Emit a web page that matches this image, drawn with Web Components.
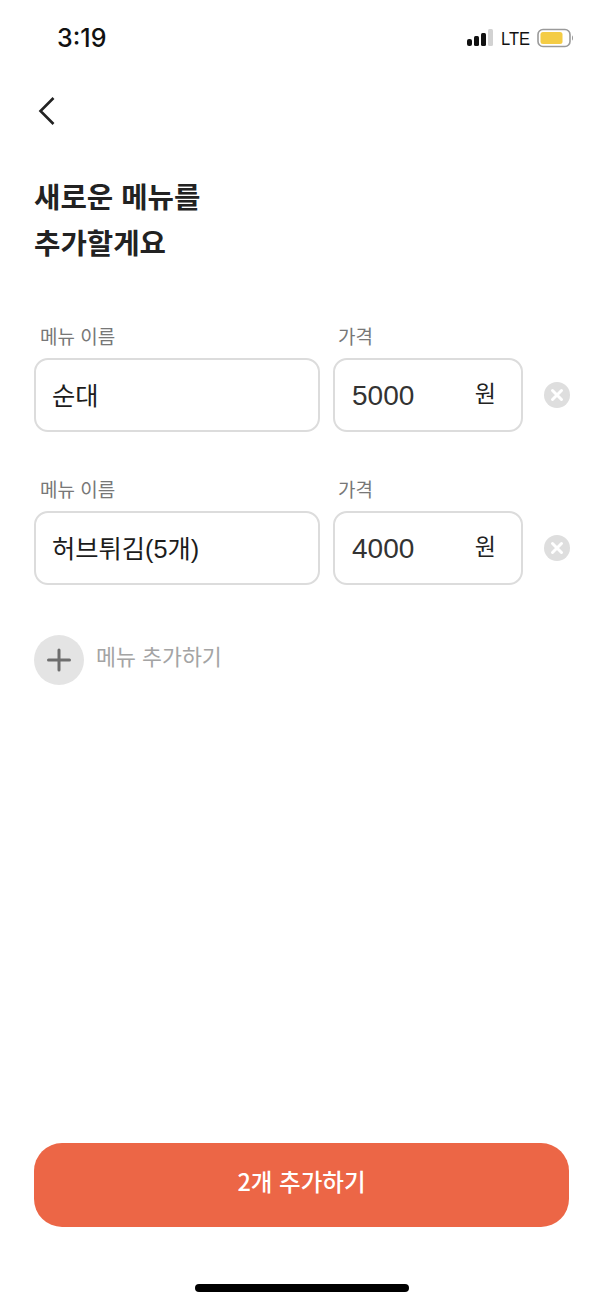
<!DOCTYPE html>
<html lang="ko">
<head>
<meta charset="utf-8">
<title>메뉴 추가</title>
<style>
  html, body { margin: 0; background: #fff; }
  body { font-family: "Noto Sans CJK KR", "Noto Sans", sans-serif; }
</style>
</head>
<body>
<menu-page>
  <status-bar time="3:19"></status-bar>
  <back-nav></back-nav>
  <page-title>새로운 메뉴를<br>추가할게요</page-title>
  <menu-row name="순대" price="5000"></menu-row>
  <menu-row name="허브튀김(5개)" price="4000"></menu-row>
  <add-menu>메뉴 추가하기</add-menu>
  <submit-button slot="bottom">2개 추가하기</submit-button>
  <home-bar slot="bottom"></home-bar>
</menu-page>

<script>
customElements.define('menu-page', class extends HTMLElement {
  constructor() {
    super();
    this.attachShadow({ mode: 'open' }).innerHTML = `
      <style>
        :host { display: flex; flex-direction: column; justify-content: space-between; width: 603px; height: 1304px; overflow: hidden; }
      </style>
      <div><slot></slot></div>
      <div><slot name="bottom"></slot></div>
    `;
  }
});

customElements.define('status-bar', class extends HTMLElement {
  constructor() {
    super();
    this.attachShadow({ mode: 'open' }).innerHTML = `
      <style>
        :host { display: flex; align-items: center; justify-content: space-between; height: 76px; padding: 0 29px 0 57px; }
        .time { font: 500 25px/1 Inter, "Liberation Sans", sans-serif; color: #111; }
        .right { display: flex; align-items: center; gap: 7px; }
        .lte { font: 500 16.500px/1 "Liberation Sans", sans-serif; color: #111; transform: scaleY(1.15); }
      </style>
      <span class="time">${this.getAttribute('time')}</span>
      <div class="right">
        <svg width="27" height="18" viewBox="0 0 27 18">
          <rect x="0" y="10" width="5" height="7" rx="2" fill="#111"/>
          <rect x="7" y="7" width="5" height="10" rx="1.5" fill="#111"/>
          <rect x="14" y="4" width="5" height="13" rx="1.5" fill="#111"/>
          <rect x="21" y="0" width="5" height="17" rx="1.5" fill="#d2d2d2"/>
        </svg>
        <span class="lte">LTE</span>
        <svg width="37" height="20" viewBox="0 0 37 20">
          <rect x="1" y="1.5" width="32" height="17" rx="5" fill="#fff" stroke="#9a9a9a" stroke-width="1.6"/>
          <rect x="3.500" y="4" width="22" height="12" rx="2.500" fill="#f4cc45"/>
          <path d="M35 7.500c1.200.5 1.200 4.500 0 5z" fill="#8a8a8a"/>
        </svg>
      </div>
    `;
  }
});

customElements.define('back-nav', class extends HTMLElement {
  constructor() {
    super();
    this.attachShadow({ mode: 'open' }).innerHTML = `
      <style>
        :host { display: flex; align-items: center; height: 70px; padding-left: 38px; }
        svg { display: block; }
      </style>
      <svg width="18" height="30" viewBox="0 0 18 30" fill="none">
        <path d="M15.500 2 2.500 15l13 13" stroke="#222" stroke-width="2.600"/>
      </svg>
    `;
  }
});

customElements.define('page-title', class extends HTMLElement {
  constructor() {
    super();
    this.attachShadow({ mode: 'open' }).innerHTML = `
      <style>
        :host { display: block; padding: 27px 34px 0; margin-bottom: 56px; font-size: 28.700px; font-weight: 700; line-height: 46px; color: #222; }
      </style>
      <slot></slot>
    `;
  }
});

customElements.define('menu-row', class extends HTMLElement {
  constructor() {
    super();
    this.attachShadow({ mode: 'open' }).innerHTML = `
      <style>
        :host { display: grid; grid-template-columns: 286px 190px 26px; column-gap: 13px; row-gap: 7px; padding-left: 34px; margin-bottom: 42px; align-items: center; }
        .label { font-size: 19px; line-height: 30px; color: #777; padding-left: 6px; }
        .label.price { padding-left: 5px; }
        .box { box-sizing: border-box; height: 74px; border: 2px solid #dcdcdc; border-radius: 14px; display: flex; align-items: center; font-family: "Liberation Sans", "Noto Sans CJK KR", sans-serif; }
        .name { padding: 0 0 2px 16px; font-size: 25.300px; color: #1c1c1c; }
        .cost { justify-content: space-between; padding: 0 25px 0 17px; font-size: 28px; color: #333; }
        .num { position: relative; top: 1px; }
        .unit { font-size: 23px; color: #222; position: relative; top: -3px; }
        svg { display: block; margin-left: 8px; }
      </style>
      <span class="label">메뉴 이름</span>
      <span class="label price">가격</span>
      <span></span>
      <div class="box name">${this.getAttribute('name')}</div>
      <div class="box cost"><span class="num">${this.getAttribute('price')}</span><span class="unit">원</span></div>
      <svg width="26" height="26" viewBox="0 0 26 26">
        <circle cx="13" cy="13" r="13" fill="#dedede"/>
        <path d="M8.500 8.500l9 9M17.500 8.500l-9 9" stroke="#fff" stroke-width="3" stroke-linecap="round"/>
      </svg>
    `;
  }
});

customElements.define('add-menu', class extends HTMLElement {
  constructor() {
    super();
    this.attachShadow({ mode: 'open' }).innerHTML = `
      <style>
        :host { display: flex; align-items: center; gap: 12px; padding-left: 34px; margin-top: 50px; font-size: 21.700px; color: #a4a4a4; }
        svg { display: block; flex: none; }
        span { position: relative; top: -5px; }
      </style>
      <svg width="50" height="50" viewBox="0 0 50 50">
        <circle cx="25" cy="25" r="25" fill="#e4e4e4"/>
        <path d="M25 15v20M14.500 25h21" stroke="#6e6e6e" stroke-width="3" stroke-linecap="round"/>
      </svg>
      <span><slot></slot></span>
    `;
  }
});

customElements.define('submit-button', class extends HTMLElement {
  constructor() {
    super();
    this.attachShadow({ mode: 'open' }).innerHTML = `
      <style>
        :host { display: flex; align-items: center; justify-content: center; height: 84px; margin: 0 34px 57px; border-radius: 28px; background: #ec6646; color: #fff; font-size: 23.500px; font-weight: 500; }
        span { position: relative; top: -4px; }
      </style>
      <span><slot></slot></span>
    `;
  }
});

customElements.define('home-bar', class extends HTMLElement {
  constructor() {
    super();
    this.attachShadow({ mode: 'open' }).innerHTML = `
      <style>
        :host { display: block; width: 214px; height: 8px; margin: 0 auto 12px; border-radius: 4px; background: #000; }
      </style>
    `;
  }
});
</script>
</body>
</html>
